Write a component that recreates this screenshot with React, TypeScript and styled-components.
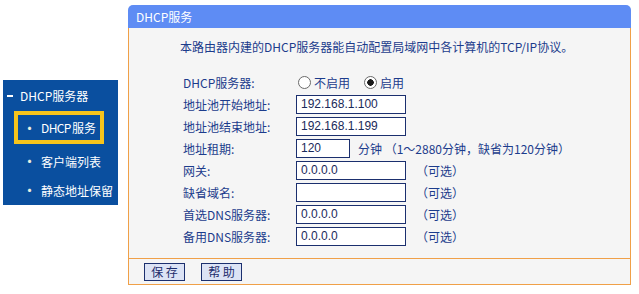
import React from 'react';
import styled, { createGlobalStyle } from 'styled-components';

const GlobalStyle = createGlobalStyle`
  html, body {
    margin: 0;
    padding: 0;
    background: #ffffff;
  }
  body {
    font-family: "Noto Sans CJK SC", "Noto Sans", sans-serif;
    font-size: 12px;
  }
`;

interface Field {
  label: string;
  value: string;
  width?: number;
  note?: string;
}

const fields: Field[] = [
  { label: '地址池开始地址:', value: '192.168.1.100' },
  { label: '地址池结束地址:', value: '192.168.1.199' },
  { label: '地址租期:', value: '120', width: 54, note: '分钟 （1～2880分钟，缺省为120分钟）' },
  { label: '网关:', value: '0.0.0.0', note: '（可选）' },
  { label: '缺省域名:', value: '', note: '（可选）' },
  { label: '首选DNS服务器:', value: '0.0.0.0', note: '（可选）' },
  { label: '备用DNS服务器:', value: '0.0.0.0', note: '（可选）' },
];

const App = () => {
  return (
    <Page>
      <GlobalStyle />
      <Sidebar>
        <MenuTitle>
          <Dash />
          DHCP服务器
        </MenuTitle>
        <MenuItem active>
          <Bullet>•</Bullet>
          <Tight>DHCP</Tight>服务
        </MenuItem>
        <MenuItem>
          <Bullet>•</Bullet>客户端列表
        </MenuItem>
        <MenuItem>
          <Bullet>•</Bullet>静态地址保留
        </MenuItem>
      </Sidebar>

      <Panel>
        <Header>DHCP服务</Header>
        <Body>
          <Intro>本路由器内建的DHCP服务器能自动配置局域网中各计算机的TCP/IP协议。</Intro>
          <Form>
            <Label>DHCP服务器:</Label>
            <Value>
              <Radio>
                <RadioCircle />
                不启用
              </Radio>
              <Radio>
                <RadioCircle checked />
                启用
              </Radio>
            </Value>
            {fields.map((f) => (
              <React.Fragment key={f.label}>
                <Label>{f.label}</Label>
                <Value>
                  <Input w={f.width}>{f.value}</Input>
                  {f.note && <Note narrow={!!f.width}>{f.note}</Note>}
                </Value>
              </React.Fragment>
            ))}
          </Form>
        </Body>
        <Footer>
          <Button>保 存</Button>
          <Button>帮 助</Button>
        </Footer>
      </Panel>
    </Page>
  );
};

export default App;

const Page = styled.div`
  display: flex;
  align-items: flex-start;
  width: 639px;
  height: 294px;
`;

const Sidebar = styled.div`
  margin: 80px 0 0 3px;
  width: 115px;
  height: 125px;
  background: #0a4f9f;
  color: #ffffff;
  display: flex;
  flex-direction: column;
  box-sizing: border-box;
  padding-top: 8px;
`;

const MenuTitle = styled.div`
  display: flex;
  align-items: center;
  height: 16px;
  line-height: 16px;
  padding-left: 4px;
`;

const Dash = styled.span`
  display: inline-block;
  width: 6px;
  height: 2px;
  background: #ffffff;
  margin-right: 7px;
`;

const MenuItem = styled.div<{ active?: boolean }>`
  display: flex;
  align-items: center;
  box-sizing: border-box;
  align-self: flex-start;
  margin-left: ${(p) => (p.active ? '11px' : '15px')};
  height: ${(p) => (p.active ? '34px' : '30px')};
  margin-top: ${(p) => (p.active ? '7px' : '0')};
  margin-bottom: ${(p) => (p.active ? '2px' : '0')};
  padding: 0 ${(p) => (p.active ? '4px' : '0')} 0 4px;
  border: ${(p) => (p.active ? '4px solid #f7c41c' : 'none')};
  white-space: nowrap;
`;

const Tight = styled.span`
  letter-spacing: -0.6px;
  margin-right: 1px;
`;

const Bullet = styled.span`
  font-size: 15px;
  line-height: 12px;
  margin-right: 4px;
  color: #e8f0e0;
`;

const Panel = styled.div`
  margin: 5px 0 0 10px;
  width: 503px;
  display: flex;
  flex-direction: column;
`;

const Header = styled.div`
  height: 23px;
  line-height: 23px;
  background: #5e8cf4;
  color: #ffffff;
  border-radius: 5px 5px 0 0;
  padding-left: 8px;
`;

const Body = styled.div`
  background: #f5f5f5;
  border-left: 1px solid #f0a048;
  border-right: 1px solid #f0a048;
  border-bottom: 1px solid #f0a048;
  padding: 11px 0 11px 51px;
  color: #1c3c8c;
`;

const Intro = styled.div`
  height: 16px;
  line-height: 16px;
  margin-bottom: 16px;
  white-space: nowrap;
`;

const Form = styled.div`
  display: grid;
  grid-template-columns: 113px auto;
  grid-auto-rows: 22px;
  margin-left: 3px;
`;

const Label = styled.div`
  display: flex;
  align-items: center;
  white-space: nowrap;
`;

const Value = styled.div`
  display: flex;
  align-items: center;
  white-space: nowrap;
`;

const Radio = styled.span`
  display: flex;
  align-items: center;
  margin-right: 12px;
`;

const RadioCircle = styled.span<{ checked?: boolean }>`
  box-sizing: border-box;
  width: 13px;
  height: 13px;
  border-radius: 50%;
  border: 1px solid #6a6a6a;
  background: ${(p) =>
    p.checked ? 'radial-gradient(circle, #1a1a1a 0 3px, #ffffff 3.5px)' : '#ffffff'};
  margin: 0 3px 0 2px;
`;

const Input = styled.div<{ w?: number }>`
  box-sizing: border-box;
  width: ${(p) => p.w || 110}px;
  height: 19px;
  border: 1px solid #1b2f6e;
  background: #ffffff;
  color: #1a2a5a;
  font-family: "Liberation Sans", Arial, sans-serif;
  font-size: 12px;
  line-height: 17px;
  padding-left: 4px;
`;

const Note = styled.span<{ narrow?: boolean }>`
  margin-left: ${(p) => (p.narrow ? '8px' : '10px')};
`;

const Footer = styled.div`
  height: 25px;
  background: #f5f5f5;
  border-left: 1px solid #f0a048;
  border-right: 1px solid #f0a048;
  border-bottom: 1px solid #f0a048;
  display: flex;
  align-items: center;
  gap: 16px;
  padding-left: 15px;
`;

const Button = styled.div`
  box-sizing: border-box;
  width: 41px;
  height: 18px;
  line-height: 16px;
  text-align: center;
  background: #dce3f5;
  border: 1px solid #1b2f6e;
  color: #1c2c6c;
  font-size: 12px;
`;
